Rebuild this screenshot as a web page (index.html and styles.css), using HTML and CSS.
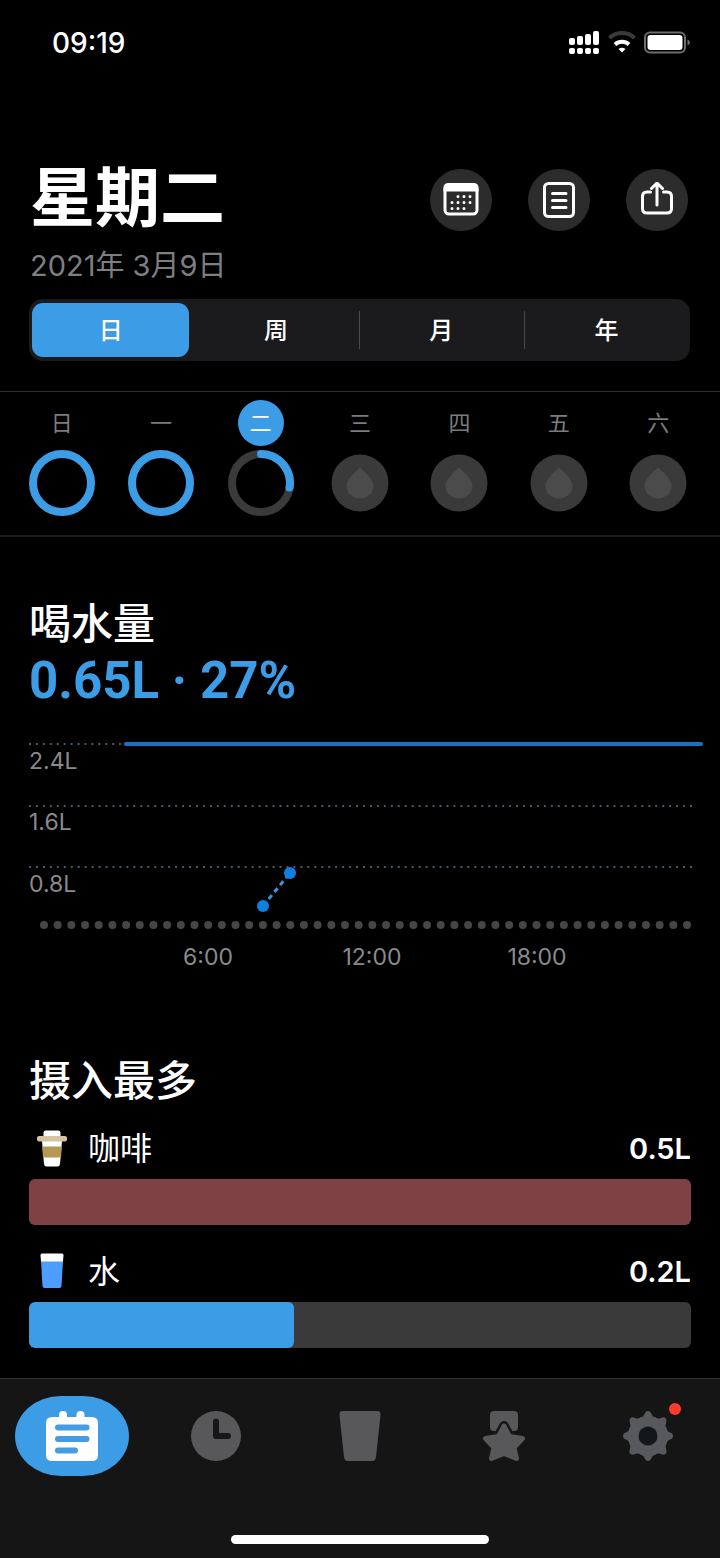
FILE: index.html
```html
<!DOCTYPE html>
<html lang="zh-CN">
<head>
    <meta charset="UTF-8">
    <meta name="viewport" content="width=device-width, initial-scale=1.0">
    <title>喝水量</title>
    <link rel="stylesheet" href="styles.css">
</head>
<body>
    <div class="status">
        <span class="time">09:19</span>
        <svg class="status-icons" width="122" height="24" viewBox="0 0 122 24" aria-hidden="true">
            <g fill="#fff">
                <rect x="0" y="7" width="6" height="7" rx="2"/>
                <rect x="8" y="5" width="6" height="9" rx="2"/>
                <rect x="16" y="3" width="6" height="11" rx="2"/>
                <rect x="24" y="0" width="6" height="14" rx="2"/>
                <rect x="0" y="17" width="6" height="6" rx="2"/>
                <rect x="8" y="17" width="6" height="6" rx="2"/>
                <rect x="16" y="17" width="6" height="6" rx="2"/>
                <rect x="24" y="17" width="6" height="6" rx="2"/>
                <path d="M49.500 18q3.500-2.500 7 0L53 21.500z"/>
                <rect x="78.500" y="4" width="35" height="15" rx="3"/>
            </g>
            <path d="M40.500 7a18 18 0 0 1 25 0" fill="none" stroke="#3a3a3a" stroke-width="4"/>
            <path d="M46 13.500a10.500 10.500 0 0 1 14 0" fill="none" stroke="#fff" stroke-width="4"/>
            <rect x="76" y="1.500" width="40" height="20" rx="5" fill="none" stroke="#6d6d6d" stroke-width="2"/>
            <path d="M118.500 8.500q2.500 1 2.500 3t-2.500 3z" fill="#6d6d6d"/>
        </svg>
    </div>

    <header class="header">
        <div>
            <h1>星期二</h1>
            <p class="date">2021年 3月9日</p>
        </div>
        <div class="actions">
            <button class="round" aria-label="日历">
                <svg width="36" height="36" viewBox="0 0 36 36">
                    <rect x="2" y="3" width="32" height="29" rx="4" fill="none" stroke="#fff" stroke-width="3"/>
                    <path d="M.5 9.500V6q0-5 5-5h25q5 0 5 5v3.500z" fill="#fff"/>
                    <path d="M15 14.500h13M9 20.500h19M9 26.500h13" fill="none" stroke="#fff" stroke-width="3" stroke-linecap="round" stroke-dasharray="0 6"/>
                </svg>
            </button>
            <button class="round" aria-label="记录">
                <svg width="36" height="36" viewBox="0 0 36 36">
                    <rect x="3.500" y="1.500" width="29" height="33" rx="4" fill="none" stroke="#fff" stroke-width="3"/>
                    <path d="M11.500 11.500h13.500M11.500 18.500h13.500M11.500 25.500h13.500" stroke="#fff" stroke-width="3" stroke-linecap="round"/>
                </svg>
            </button>
            <button class="round" aria-label="分享">
                <svg width="36" height="36" viewBox="0 0 36 36" fill="none" stroke="#fff" stroke-width="3" stroke-linecap="round" stroke-linejoin="round">
                    <path d="M11.500 10H8q-4.500 0-4.500 4.500v12q0 4.500 4.500 4.500h20q4.500 0 4.500-4.500v-12q0-4.500-4.500-4.500h-3.500M18 23V1.500M12.500 6.500L18 1l5.500 5.500"/>
                </svg>
            </button>
        </div>
    </header>

    <div class="segments">
        <button class="segment active">日</button>
        <button class="segment">周</button>
        <button class="segment divided">月</button>
        <button class="segment divided">年</button>
    </div>

    <div class="week">
        <div class="day">
            <span class="day-name">日</span>
            <svg width="66" height="66" viewBox="0 0 66 66"><circle cx="33" cy="33" r="29" class="ring full"/></svg>
        </div>
        <div class="day">
            <span class="day-name">一</span>
            <svg width="66" height="66" viewBox="0 0 66 66"><circle cx="33" cy="33" r="29" class="ring full"/></svg>
        </div>
        <div class="day">
            <span class="day-name today">二</span>
            <svg width="66" height="66" viewBox="0 0 66 66">
                <circle cx="33" cy="33" r="29" class="ring"/>
                <path d="M33 4A29 29 0 0 1 61.600 37.500" class="ring full"/>
            </svg>
        </div>
        <div class="day">
            <span class="day-name">三</span>
            <svg width="66" height="66" viewBox="0 0 66 66"><circle cx="33" cy="33" r="28.500" fill="#3a3a3a"/><path d="M34 18.300C40 24 46.500 30 46.500 36a13.500 12.500 0 0 1-27 0C19.500 30 26 24 32 18.300Q33 17.500 34 18.300z" fill="#4b4b4b"/></svg>
        </div>
        <div class="day">
            <span class="day-name">四</span>
            <svg width="66" height="66" viewBox="0 0 66 66"><circle cx="33" cy="33" r="28.500" fill="#3a3a3a"/><path d="M34 18.300C40 24 46.500 30 46.500 36a13.500 12.500 0 0 1-27 0C19.500 30 26 24 32 18.300Q33 17.500 34 18.300z" fill="#4b4b4b"/></svg>
        </div>
        <div class="day">
            <span class="day-name">五</span>
            <svg width="66" height="66" viewBox="0 0 66 66"><circle cx="33" cy="33" r="28.500" fill="#3a3a3a"/><path d="M34 18.300C40 24 46.500 30 46.500 36a13.500 12.500 0 0 1-27 0C19.500 30 26 24 32 18.300Q33 17.500 34 18.300z" fill="#4b4b4b"/></svg>
        </div>
        <div class="day">
            <span class="day-name">六</span>
            <svg width="66" height="66" viewBox="0 0 66 66"><circle cx="33" cy="33" r="28.500" fill="#3a3a3a"/><path d="M34 18.300C40 24 46.500 30 46.500 36a13.500 12.500 0 0 1-27 0C19.500 30 26 24 32 18.300Q33 17.500 34 18.300z" fill="#4b4b4b"/></svg>
        </div>
    </div>

    <!-- Intake chart -->
    <section class="intake">
        <h2>喝水量</h2>
        <p class="total">0.65L · 27%</p>
    </section>
    <svg class="chart" viewBox="0 0 720 240">
        <line class="grid-line" x1="29" y1="9" x2="126" y2="9" pathLength="98"/>
        <line class="grid-line" x1="29" y1="71" x2="692" y2="71" pathLength="667"/>
        <line class="grid-line" x1="29" y1="132" x2="692" y2="132" pathLength="667"/>
        <line class="goal" x1="126" y1="9" x2="701" y2="9"/>
        <line class="trend" x1="263" y1="171" x2="290" y2="138"/>
        <circle class="point" cx="263" cy="171" r="6"/>
        <circle class="point" cx="290" cy="138" r="6"/>
        <line class="slots" x1="44" y1="190" x2="687" y2="190" pathLength="470"/>
        <text x="29" y="34">2.4L</text>
        <text x="29" y="95">1.6L</text>
        <text x="29" y="157">0.8L</text>
        <text class="hour" x="208" y="230">6:00</text>
        <text class="hour" x="372" y="230">12:00</text>
        <text class="hour" x="537" y="230">18:00</text>
    </svg>

    <!-- Top drinks -->
    <section class="drinks">
        <h2>摄入最多</h2>
        <div class="drink">
            <div class="drink-head">
                <svg width="32" height="38" viewBox="0 0 32 38">
                    <path d="M9.500.5h13q1.500 0 2 2v9h-17v-9q.5-2 2-2z" fill="#fff"/>
                    <path d="M6 11h20l-2 23q-.3 2.500-2.500 2.500h-11Q8.300 36.500 8 34z" fill="#fff"/>
                    <path d="M6.200 16.500h19.600L25 27.500H7z" fill="#b59855"/>
                    <rect x="1" y="6" width="30" height="5.500" rx="2" fill="#d5c3a1"/>
                </svg>
                <span class="drink-name">咖啡</span>
                <span class="amount">0.5L</span>
            </div>
            <div class="bar"><div class="fill coffee" style="width: 100%"></div></div>
        </div>
        <div class="drink">
            <div class="drink-head">
                <svg width="32" height="38" viewBox="0 0 32 38">
                    <path d="M5 8h22l-1.500 25q-.2 2-2 2h-15q-1.800 0-2-2z" fill="#4c9dfc"/>
                    <path d="M6 .5h20q1.500 0 1.500 1.500l-.5 6.500H5L4.500 2q0-1.500 1.500-1.500z" fill="#fff"/>
                </svg>
                <span class="drink-name">水</span>
                <span class="amount">0.2L</span>
            </div>
            <div class="bar"><div class="fill water" style="width: 40%"></div></div>
        </div>
    </section>

    <nav class="tabbar">
        <div class="tabs">
            <a href="#" class="tab active" aria-label="日志">
                <svg width="54" height="52" viewBox="0 0 54 52">
                    <path d="M14 7V5a4 4 0 0 1 8 0v2h9.500V5a4 4 0 0 1 8 0v2H47q6 0 6 6v32q0 6-6 6H7q-6 0-6-6V13q0-6 6-6z" fill="#fff"/>
                    <path d="M13 17.500h28.500M13 29h28.500M13 40.500h17" stroke="#459ce3" stroke-width="6" stroke-linecap="round"/>
                </svg>
            </a>
            <a href="#" class="tab" aria-label="历史">
                <svg width="50" height="50" viewBox="0 0 50 50">
                    <circle cx="25" cy="25" r="25" fill="#58585a"/>
                    <path d="M25 10.500V25h12" fill="none" stroke="#171718" stroke-width="6" stroke-linecap="round" stroke-linejoin="round"/>
                </svg>
            </a>
            <a href="#" class="tab" aria-label="饮品">
                <svg width="50" height="50" viewBox="0 0 50 50">
                    <path d="M8 0h34q4 0 3.500 4l-4.500 42q-.5 4-4 4H13q-3.500 0-4-4L4.500 4Q4 0 8 0z" fill="#58585a"/>
                </svg>
            </a>
            <a href="#" class="tab" aria-label="成就">
                <svg width="50" height="50" viewBox="0 0 50 50" stroke-linejoin="round">
                    <path d="M15 0h20q4 0 4 4v12q0 4-4 4H15q-4 0-4-4V4q0-4 4-4z" fill="#58585a"/>
                    <path d="M25 15l5.500 10.500L43.500 27.500l-8.500 9 2.500 11L25 42.500l-12.500 5 2.500-11-8.500-9 13-2z" fill="#151515" stroke="#151515" stroke-width="10"/>
                    <path d="M25 15l5.500 10.500L43.500 27.500l-8.500 9 2.500 11L25 42.500l-12.500 5 2.500-11-8.500-9 13-2z" fill="#58585a" stroke="#58585a" stroke-width="5"/>
                </svg>
            </a>
            <a href="#" class="tab" aria-label="设置">
                <svg width="50" height="50" viewBox="0 0 50 50" fill="#58595d">
                    <defs>
                        <path id="tooth" d="M17 6.500Q20.500 6 21.500 3 22.500 0 25 0t3.500 3q1 3 4.500 3.500L25 25z"/>
                    </defs>
                    <circle cx="25" cy="25" r="19.500"/>
                    <use href="#tooth"/>
                    <use href="#tooth" transform="rotate(45 25 25)"/>
                    <use href="#tooth" transform="rotate(90 25 25)"/>
                    <use href="#tooth" transform="rotate(135 25 25)"/>
                    <use href="#tooth" transform="rotate(180 25 25)"/>
                    <use href="#tooth" transform="rotate(225 25 25)"/>
                    <use href="#tooth" transform="rotate(270 25 25)"/>
                    <use href="#tooth" transform="rotate(315 25 25)"/>
                    <circle cx="25" cy="25" r="9.500" fill="#13171a"/>
                </svg>
                <span class="badge"></span>
            </a>
        </div>
        <div class="home-indicator"></div>
    </nav>
</body>
</html>
```
FILE: styles.css
```css
* {
    box-sizing: border-box;
}
body {
    margin: 0;
    min-height: 100vh;
    display: flex;
    flex-direction: column;
    background-color: #000;
    color: #fff;
    font-family: Inter, "Noto Sans CJK SC", sans-serif;
}
h1, h2, p {
    margin: 0;
}
svg {
    display: block;
}
button {
    border: none;
    padding: 0;
    color: #fff;
    font-family: inherit;
    cursor: pointer;
}
.status {
    display: flex;
    justify-content: space-between;
    align-items: center;
    height: 86px;
    padding: 0 29px 0 52px;
}
.time {
    font-size: 28px;
    font-weight: 500;
}
.header {
    display: flex;
    justify-content: space-between;
    align-items: flex-start;
    margin-top: 83px;
    padding: 0 32px 0 30px;
}
h1 {
    font-size: 65px;
    line-height: 58px;
    font-weight: 700;
}
.date {
    margin-top: 21px;
    font-size: 29px;
    line-height: 36px;
    font-weight: 400;
    color: #7f7f83;
}
.actions {
    display: flex;
    gap: 36px;
}
.round {
    display: flex;
    align-items: center;
    justify-content: center;
    width: 62px;
    height: 62px;
    border-radius: 50%;
    background-color: #2c2c2c;
}
.segments {
    display: grid;
    grid-template-columns: repeat(4, 1fr);
    height: 62px;
    margin: 15px 30px 0 29px;
    border-radius: 14px;
    background-color: #1b1b1d;
}
.segment {
    position: relative;
    margin: 4px 5px 4px 3px;
    padding-bottom: 3px;
    border-radius: 11px;
    background: none;
    font-size: 24px;
    font-weight: 500;
}
.segment.active {
    background-color: #3c9de6;
}
.segment.divided::before {
    content: "";
    position: absolute;
    left: -4px;
    top: 8px;
    bottom: 8px;
    width: 1px;
    background-color: #48484a;
}
.week {
    display: grid;
    grid-template-columns: repeat(7, 1fr);
    margin-top: 30px;
    padding: 8px 12px 19px;
    border-top: 1px solid #303030;
    border-bottom: 2px solid #1c1c1e;
}
.day {
    display: flex;
    flex-direction: column;
    align-items: center;
    gap: 4px;
}
.day-name {
    width: 46px;
    border-radius: 50%;
    font-size: 22px;
    line-height: 46px;
    font-weight: 400;
    text-align: center;
    color: #7c7c80;
}
.day-name.today {
    background-color: #3c9de6;
    color: #fff;
}
.ring {
    fill: none;
    stroke: #3a3a3a;
    stroke-width: 8px;
    stroke-linecap: round;
}
.ring.full {
    stroke: #3c9de6;
}
h2 {
    font-size: 42px;
    line-height: 50px;
    font-weight: 500;
}
.intake {
    padding: 62px 29px 0;
}
.total {
    margin-top: 4px;
    font-family: Roboto, Inter, sans-serif;
    font-size: 51px;
    line-height: 56px;
    font-weight: 700;
    color: #3c9de6;
}
.chart {
    width: 100%;
    margin-top: 26px;
}
.chart text {
    font-size: 23px;
    fill: #8a8a8e;
}
.chart .hour {
    text-anchor: middle;
}
.grid-line {
    stroke: #44596b;
    stroke-width: 2px;
    stroke-dasharray: 2 5;
}
.goal {
    stroke: #1a73c2;
    stroke-width: 4px;
    stroke-linecap: round;
}
.trend {
    stroke: #3f93d8;
    stroke-width: 3px;
    stroke-dasharray: 5 4;
}
.point {
    fill: #0d80e0;
}
.slots {
    stroke: #464646;
    stroke-width: 8px;
    stroke-linecap: round;
    stroke-dasharray: 0 10;
}
.drinks {
    padding: 81px 29px 30px;
}
.drink {
    margin-top: 25px;
}
h2 + .drink {
    margin-top: 21px;
}
.drink-head {
    display: flex;
    align-items: center;
    gap: 20px;
    height: 44px;
    margin-bottom: 8px;
    padding-left: 7px;
}
.drink-name {
    flex: 1;
    font-size: 32px;
    line-height: 44px;
    font-weight: 400;
}
.amount {
    font-size: 29px;
    line-height: 44px;
    font-weight: 600;
}
.bar {
    height: 46px;
    border-radius: 6px;
    background-color: #3a3a3a;
    overflow: hidden;
}
.fill {
    height: 100%;
    border-radius: 6px;
}
.fill.coffee {
    background-color: #804145;
}
.fill.water {
    background-color: #3c9de6;
}
.tabbar {
    margin-top: auto;
    padding: 17px 0 15px;
    border-top: 1px solid #343434;
    background-color: #151515;
}
.tabs {
    display: grid;
    grid-template-columns: repeat(5, 1fr);
    justify-items: center;
}
.tab {
    position: relative;
    display: flex;
    align-items: center;
    justify-content: center;
    width: 114px;
    height: 80px;
    border-radius: 46px / 40px;
}
.tab.active {
    background-color: #3c9de6;
}
.badge {
    position: absolute;
    top: 7px;
    right: 24px;
    width: 12px;
    height: 12px;
    border-radius: 50%;
    background-color: #fd3b30;
}
.home-indicator {
    width: 258px;
    height: 9px;
    margin: 59px auto 0;
    border-radius: 5px;
    background-color: #fff;
}
```
